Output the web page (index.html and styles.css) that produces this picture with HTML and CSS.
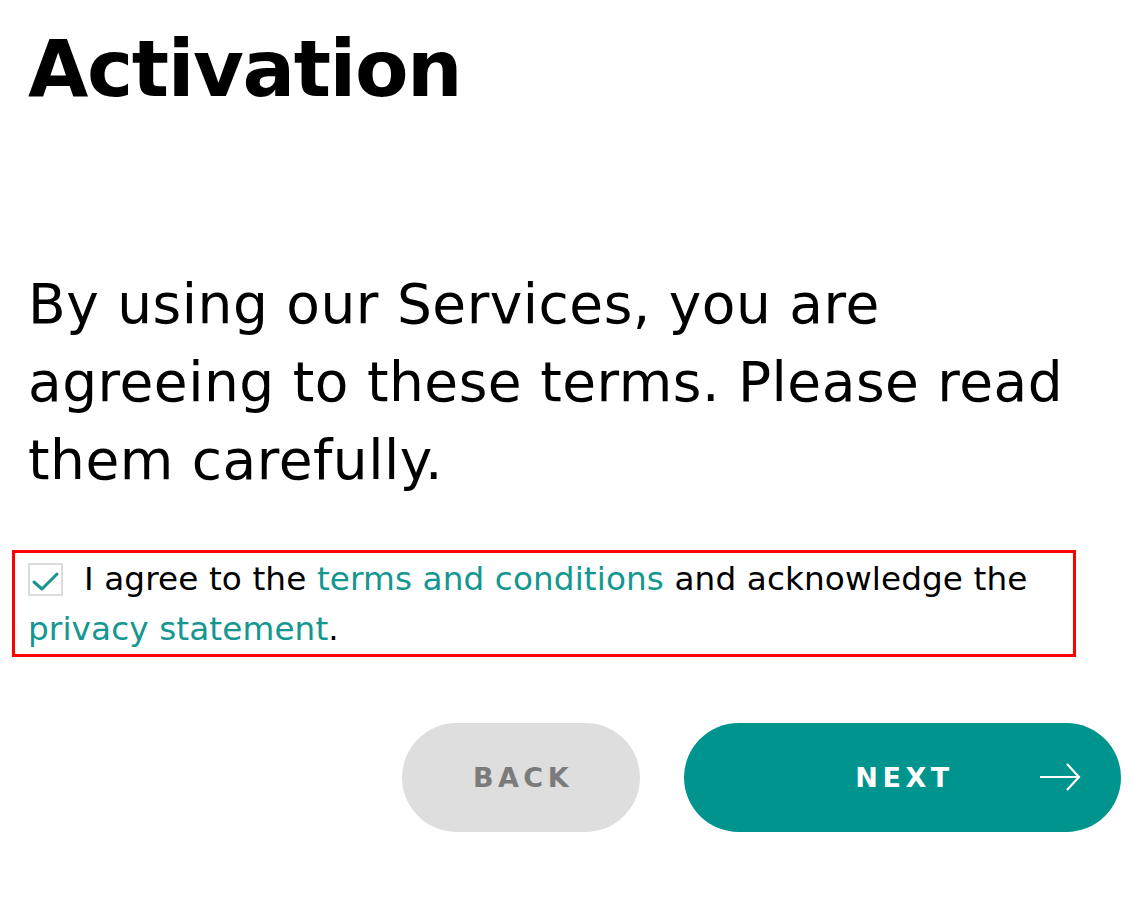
FILE: index.html
```html
<!DOCTYPE html>
<html lang="en">
<head>
<meta charset="utf-8">
<title>Activation</title>
<link rel="stylesheet" href="styles.css">
</head>
<body>
<main class="page">
  <h1 class="title">Activation</h1>
  <p class="lead">By using our Services, you are agreeing to these terms. Please read them carefully.</p>
  <label class="agree">
    <span class="checkbox">
      <svg viewBox="0 0 35 33" width="35" height="33" aria-hidden="true"><polyline points="6,19 14,26 29,11" fill="none" stroke="#17958f" stroke-width="3" stroke-linecap="round" stroke-linejoin="round"/></svg>
    </span><span class="agree-text">I agree to the <a class="link" href="#">terms and conditions</a> and acknowledge the <a class="link" href="#">privacy statement</a>.</span>
  </label>
  <div class="actions">
    <button class="btn btn-back" type="button">BACK</button>
    <button class="btn btn-next" type="button">NEXT
      <svg class="arrow" viewBox="0 0 42 28" width="42" height="28" aria-hidden="true"><path d="M1 14 H40 M28 1 L40 14 L28 27" fill="none" stroke="#fff" stroke-width="2.2"/></svg>
    </button>
  </div>
</main>
</body>
</html>
```
FILE: styles.css
```css
html, body {
  margin: 0;
  padding: 0;
  background: #fff;
}

body {
  font-family: "DejaVu Sans", "Liberation Sans", sans-serif;
  color: #000;
}

.page {
  padding: 22px 27px 0 28px;
}

.title {
  margin: 0;
  font-size: 78px;
  line-height: 94px;
  font-weight: 700;
  letter-spacing: -1.4px;
}

.lead {
  margin: 149px 0 0;
  font-size: 55px;
  line-height: 78px;
  font-weight: 400;
  letter-spacing: 0.5px;
}

.agree {
  display: block;
  box-sizing: border-box;
  width: 1064px;
  margin: 51px 0 0 -16px;
  padding: 1px 10px 0 13px;
  border: 3px solid #ff0000;
  font-size: 32.7px;
  line-height: 50px;
  letter-spacing: 0.1px;
}

.checkbox {
  display: inline-block;
  box-sizing: border-box;
  width: 35px;
  height: 33px;
  margin-top: 9px;
  margin-right: 21px;
  vertical-align: top;
  border: 2px solid #dcdcdc;
  position: relative;
}

.checkbox svg {
  position: absolute;
  left: -2px;
  top: -2px;
}

.link {
  color: #139790;
  text-decoration: none;
}

.actions {
  display: flex;
  justify-content: flex-end;
  gap: 44px;
  margin-top: 66px;
}

.btn {
  height: 109px;
  border: none;
  border-radius: 55px;
  font-family: "DejaVu Sans", "Liberation Sans", sans-serif;
  font-weight: 700;
  font-size: 27px;
  letter-spacing: 4.5px;
  padding: 0 0 0 4px;
  cursor: pointer;
}

.btn-back {
  width: 238px;
  background: #dedede;
  color: #7b7b7b;
}

.btn-next {
  width: 437px;
  background: #00948f;
  color: #fff;
  position: relative;
}

.arrow {
  position: absolute;
  right: 40px;
  top: 40px;
}
```
